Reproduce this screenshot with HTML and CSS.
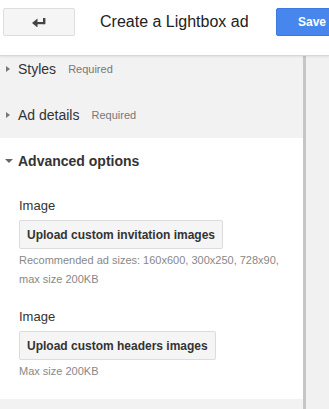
FILE: index.html
```html
<!DOCTYPE html>
<html>
<head>
  <title>Create a Lightbox ad</title>
  <link rel="stylesheet" href="styles.css">
</head>
<body>
  <div class="topbar">
    <button class="back-btn" title="Back">
      <svg width="14" height="10" viewBox="0 0 14 10">
        <polygon points="0,6 5.5,1.5 5.5,10.5" fill="#444"/>
        <rect x="4" y="5" width="8" height="2.2" fill="#444"/>
        <rect x="11" y="1" width="2.4" height="6.2" fill="#444"/>
      </svg>
    </button>
    <div class="title">Create a Lightbox ad</div>
    <button class="save-btn">Save</button>
  </div>

  <div class="main">
    <div class="panel">
      <div class="section collapsed first">
        <span class="arrow-right"></span>
        <span class="section-title">Styles</span>
        <span class="required">Required</span>
      </div>
      <div class="section collapsed">
        <span class="arrow-right"></span>
        <span class="section-title">Ad details</span>
        <span class="required">Required</span>
      </div>
      <div class="section open">
        <div class="section-head">
          <span class="arrow-down"></span>
          <span class="section-title bold">Advanced options</span>
        </div>
        <div class="field">
          <div class="field-label">Image</div>
          <button class="upload-btn">Upload custom invitation images</button>
          <div class="help">Recommended ad sizes: 160x600, 300x250, 728x90, max size 200KB</div>
        </div>
        <div class="field">
          <div class="field-label">Image</div>
          <button class="upload-btn">Upload custom headers images</button>
          <div class="help">Max size 200KB</div>
        </div>
      </div>
      <div class="section collapsed"></div>
    </div>
    <div class="divider"></div>
    <div class="side"></div>
  </div>
</body>
</html>
```

FILE: styles.css
```css
body {
  margin: 0;
  height: 409px;
  font-family: "Liberation Sans", Arial, sans-serif;
  color: #222;
  overflow: hidden;
  background: #f1f1f1;
}

.topbar {
  display: flex;
  align-items: flex-start;
  height: 56px;
  padding: 8px 0 0 3px;
  box-sizing: border-box;
  overflow: hidden;
  background: #fff;
  border-bottom: 1px solid #d8d8d8;
  box-shadow: 0 1px 2px rgba(0, 0, 0, 0.08);
  position: relative;
  z-index: 1;
}

.back-btn {
  display: flex;
  align-items: center;
  justify-content: center;
  flex-shrink: 0;
  width: 72px;
  height: 28px;
  padding: 0;
  background: #f5f5f5;
  border: 1px solid #dedede;
  border-radius: 2px;
}

.title {
  flex-shrink: 0;
  width: 176px;
  margin-left: 25px;
  line-height: 28px;
  font-size: 16px;
  color: #222;
}

.save-btn {
  flex-shrink: 0;
  width: 76px;
  height: 28px;
  padding: 0 0 0 21px;
  text-align: left;
  background: #4787ed;
  border: 1px solid #3c7ae0;
  border-radius: 2px;
  color: #fff;
  font-family: "Liberation Sans", Arial, sans-serif;
  font-weight: bold;
  font-size: 12px;
}

.main {
  display: flex;
  height: 353px;
  overflow: hidden;
}

.panel {
  width: 303px;
  flex-shrink: 0;
  background: #fff;
}

.divider {
  width: 3px;
  flex-shrink: 0;
  background: #c6c6c6;
}

.side {
  flex: 1;
  background: #f1f1f1;
}

.section {
  padding: 13px 0 13px 0;
}

.section.collapsed {
  display: flex;
  align-items: center;
  height: 20px;
  background: #f2f2f2;
}

.section.first {
  padding-top: 3px;
}

.section-head {
  display: flex;
  align-items: center;
  height: 20px;
}

.arrow-right {
  width: 0;
  height: 0;
  margin: 0 8px 0 6px;
  border-top: 3.5px solid transparent;
  border-bottom: 3.5px solid transparent;
  border-left: 4px solid #777;
}

.arrow-down {
  width: 0;
  height: 0;
  margin: 0 5px 0 5px;
  border-left: 4px solid transparent;
  border-right: 4px solid transparent;
  border-top: 4px solid #666;
}

.section-title {
  font-size: 14px;
  color: #333;
}

.section-title.bold {
  font-weight: bold;
  color: #333;
}

.required {
  margin-left: 12px;
  font-size: 11px;
  color: #777;
}

.section.open {
  padding-bottom: 18px;
}

.field {
  padding-left: 19px;
  margin-top: 26px;
}

.field + .field {
  margin-top: 19px;
}

.field-label {
  font-size: 13px;
  line-height: 18px;
  color: #333;
  margin-bottom: 5px;
}

.upload-btn {
  height: 29px;
  padding: 0 7px;
  background: #f5f5f5;
  border: 1px solid #dcdcdc;
  border-radius: 2px;
  font-family: "Liberation Sans", Arial, sans-serif;
  font-weight: bold;
  font-size: 12px;
  color: #333;
}

.help {
  margin-top: 2px;
  width: 270px;
  font-size: 11px;
  line-height: 19px;
  color: #888;
}
```
